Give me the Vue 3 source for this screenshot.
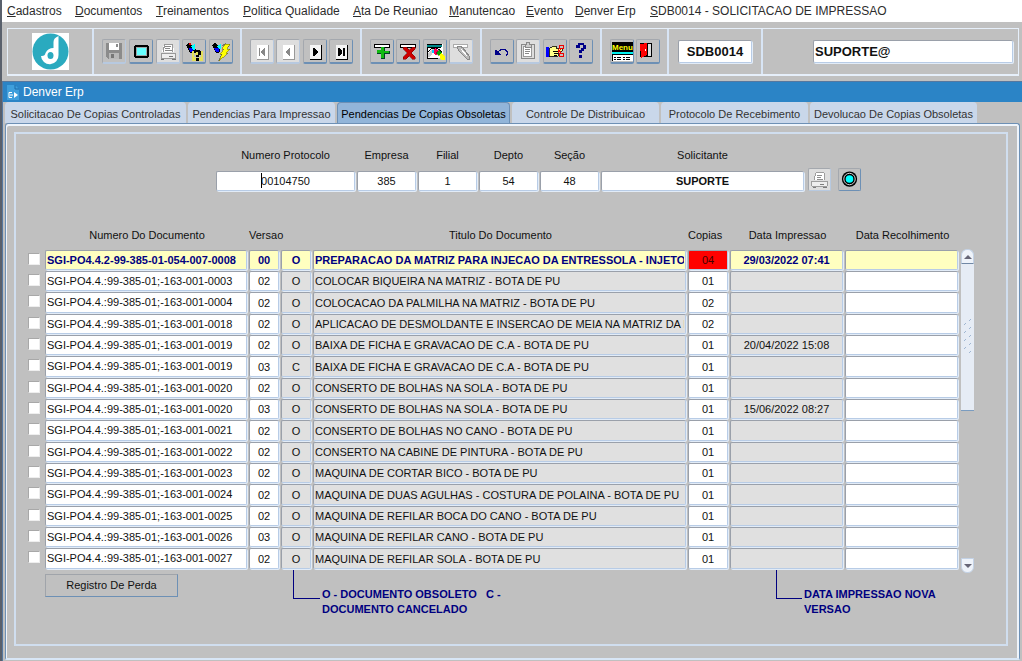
<script setup>
import { ref } from 'vue'

const menus = [
  'Cadastros', 'Documentos', 'Treinamentos', 'Politica Qualidade', 'Ata De Reuniao',
  'Manutencao', 'Evento', 'Denver Erp', 'SDB0014 - SOLICITACAO DE IMPRESSAO'
]

const tabs = [
  'Solicitacao De Copias Controladas', 'Pendencias Para Impressao', 'Pendencias De Copias Obsoletas',
  'Controle De Distribuicao', 'Protocolo De Recebimento', 'Devolucao De Copias Obsoletas'
]
const activeTab = ref(2)

const request = [
  { id: 'protocolo', label: 'Numero Protocolo', value: '00104750', cls: 'w-protocol' },
  { id: 'empresa', label: 'Empresa', value: '385', cls: 'w-short' },
  { id: 'filial', label: 'Filial', value: '1', cls: 'w-short' },
  { id: 'depto', label: 'Depto', value: '54', cls: 'w-short' },
  { id: 'secao', label: 'Seção', value: '48', cls: 'w-short' },
  { id: 'solicitante', label: 'Solicitante', value: 'SUPORTE', cls: 'w-name' }
]

const first = {
  number: 'SGI-PO4.4.2-99-385-01-054-007-0008', ver: '00', st: 'O',
  title: 'PREPARACAO DA MATRIZ PARA INJECAO DA ENTRESSOLA - INJETORA', copies: '04',
  printed: '29/03/2022 07:41'
}
const others = [
  ['0003', '02', 'O', 'COLOCAR BIQUEIRA NA MATRIZ - BOTA DE PU', '01', ''],
  ['0004', '02', 'O', 'COLOCACAO DA PALMILHA NA MATRIZ - BOTA DE PU', '02', ''],
  ['0018', '02', 'O', 'APLICACAO DE DESMOLDANTE E INSERCAO DE MEIA NA MATRIZ DA INJETORA', '02', ''],
  ['0019', '02', 'O', 'BAIXA DE FICHA E GRAVACAO DE C.A - BOTA DE PU', '01', '20/04/2022 15:08'],
  ['0019', '03', 'C', 'BAIXA DE FICHA E GRAVACAO DE C.A - BOTA DE PU', '01', ''],
  ['0020', '02', 'O', 'CONSERTO DE BOLHAS NA SOLA - BOTA DE PU', '01', ''],
  ['0020', '03', 'O', 'CONSERTO DE BOLHAS NA SOLA - BOTA DE PU', '01', '15/06/2022 08:27'],
  ['0021', '02', 'O', 'CONSERTO DE BOLHAS NO CANO - BOTA DE PU', '01', ''],
  ['0022', '02', 'O', 'CONSERTO NA CABINE DE PINTURA - BOTA DE PU', '01', ''],
  ['0023', '02', 'O', 'MAQUINA DE CORTAR BICO - BOTA DE PU', '01', ''],
  ['0024', '02', 'O', 'MAQUINA DE DUAS AGULHAS - COSTURA DE POLAINA - BOTA DE PU', '01', ''],
  ['0025', '02', 'O', 'MAQUINA DE REFILAR BOCA DO CANO - BOTA DE PU', '01', ''],
  ['0026', '03', 'O', 'MAQUINA DE REFILAR CANO - BOTA DE PU', '01', ''],
  ['0027', '02', 'O', 'MAQUINA DE REFILAR SOLA - BOTA DE PU', '01', '']
].map(([tail, ver, st, title, copies, printed]) => ({
  parts: ['SGI-PO4.4.:', '99-385-01', ';-163-001-' + tail], ver, st, title, copies, printed
}))
const rows = [first, ...others]
</script>

<template>
  <div class="app">
    <nav class="menu">
      <a v-for="m in menus" :key="m" href="#"><u>{{ m[0] }}</u>{{ m.slice(1) }}</a>
    </nav>

    <div class="toolbar">
      <div class="group g-logo">
        <svg width="37" height="37" viewBox="0 0 37 37">
          <rect width="37" height="37" fill="#fff" />
          <circle cx="18.5" cy="18.5" r="18" fill="#2aaabf" />
          <path d="M26.500 3V22A8.700 8.700 0 0 1 9 23Q13 23.500 13.500 20Q16 15 21.500 15V9Q21.500 5 26.500 3Z" fill="#fff" />
          <ellipse cx="18.500" cy="22.500" rx="3" ry="3.500" fill="#2aaabf" />
        </svg>
      </div>

      <div class="group g5">
        <button class="tool" aria-label="Salvar" disabled>
          <svg viewBox="1 1 22 22">
            <path d="M4 4H20V20H6L4 18Z" fill="#8b8b8b" />
            <path d="M7 4H17V11H7Z" fill="#fff" /><path d="M14 5H16V8H14Z" fill="#8b8b8b" />
            <path d="M7 14H17V20H7Z" fill="#b8b8b8" /><path d="M9 15H12V19H9Z" fill="#777" />
          </svg>
        </button>
        <button class="tool" aria-label="Tela">
          <svg viewBox="1 1 22 22">
            <path d="M6 6H19V7H20V18H19V19H6V18H5V7H6Z" fill="#000" />
            <path d="M7 8H18V17H7Z" fill="#a0a8a8" /><path d="M8 9H17V16H8Z" fill="#000" />
            <path d="M8 9H17V16H8Z" fill="#66ffff" />
          </svg>
        </button>
        <button class="tool off" aria-label="Imprimir" disabled>
          <svg viewBox="1 1 22 22">
            <path d="M8 5H17L18 13H6Z" fill="#fff" /><path d="M8 5H16V13M7 13V8H8V5" fill="none" stroke="#999" />
            <path d="M9 7.500H15M9 9.500H14M9 11.500H16" stroke="#888" />
            <path d="M5 14H19V19H5Z" fill="#eee" stroke="#999" /><path d="M13 17H17M5 20H8M16 20H20" stroke="#777" />
          </svg>
        </button>
        <button class="tool" aria-label="Entrar consulta">
          <svg viewBox="1 1 22 22">
            <path d="M4 6L7 4L14 10L11 14H8L6 10Z" fill="#000" /><path d="M7 9H11V13H8Z" fill="#00f" />
            <path d="M9 7L13 5V11H11Z" fill="#0ff" /><path d="M7 4H9V6H7Z" fill="#e00" />
            <path d="M10 12H12V22H10ZM19 12H21V22H19ZM13 13H16V16H13ZM17 18H19V22H17ZM12 18H14V22H12Z" fill="#e4e05a" />
            <path d="M12 14V12H13V11H18V12H19V16H17V18H14V16H16V13H14V14ZM14 19H17V22H14Z" fill="#000" />
          </svg>
        </button>
        <button class="tool" aria-label="Executar consulta">
          <svg viewBox="1 1 22 22">
            <path d="M3 6L6 4L12 9L10 14H7L5 10Z" fill="#000" /><path d="M5 9H10V13H7Z" fill="#00f" />
            <path d="M8 7L12 5V10H10Z" fill="#0ff" />
            <path d="M12 7L17 4L14 10H16L11 14H13L9 22L18 13H15L20 7Z" fill="#777" />
            <path d="M16 5H21L18 10H21L17 14H19L10 22L13 15H11L15 10H13Z" fill="#ff0" stroke="#665f00" stroke-width=".5" />
          </svg>
        </button>
      </div>

      <div class="group g4">
        <button class="tool off" aria-label="Primeiro" disabled>
          <svg viewBox="1 1 22 22"><path d="M7 6H18V20H7Z" fill="#fff" /><path d="M18.500 6V20.500H7" fill="none" stroke="#999" /><path d="M9 9H10V17H9ZM15 9V17H14L11 14V12L14 9Z" fill="#888" /></svg>
        </button>
        <button class="tool off" aria-label="Anterior" disabled>
          <svg viewBox="1 1 22 22"><path d="M7 6H18V20H7Z" fill="#fff" /><path d="M18.500 6V20.500H7" fill="none" stroke="#999" /><path d="M14 9V17H13L10 14V12L13 9Z" fill="#888" /></svg>
        </button>
        <button class="tool" aria-label="Proximo">
          <svg viewBox="1 1 22 22"><path d="M7 6H18V20H7Z" fill="#f4f4f4" /><path d="M18.500 6V20.500H7" fill="none" stroke="#000" /><path d="M10 9V17H11L15 14V12L11 9Z" fill="#000" /></svg>
        </button>
        <button class="tool" aria-label="Ultimo">
          <svg viewBox="1 1 22 22"><path d="M7 6H18V20H7Z" fill="#f4f4f4" /><path d="M18.500 6V20.500H7" fill="none" stroke="#000" /><path d="M9 9V17H10L13 14V12L10 9ZM14 9H16V17H14Z" fill="#000" /></svg>
        </button>
      </div>

      <div class="group g4">
        <button class="tool" aria-label="Inserir">
          <svg viewBox="1 1 22 22"><path d="M4 5H20V9H4Z" fill="#000" /><path d="M5 6H19V8H5Z" fill="#fff" /><path d="M12 8H15V12H20V15H15V20H11V15H7V12H12Z" fill="#042" /><path d="M11 8H14V12H19V14H14V19H11V14H7V11H11Z" fill="#1b1" /></svg>
        </button>
        <button class="tool" aria-label="Excluir">
          <svg viewBox="1 1 22 22"><path d="M4 5H20V9H4Z" fill="#000" /><path d="M5 6H19V8H5Z" fill="#fff" /><path d="M7 8H10L13 11L17 8H19V10L15 14L19 18V20H16L13 17L10 20H7V18L11 14L7 10Z" fill="#c00" stroke="#700" stroke-width=".5" /></svg>
        </button>
        <button class="tool" aria-label="Filtrar">
          <svg viewBox="1 1 22 22">
            <path d="M4 5H20V19H4Z" fill="#fff" /><path d="M4 6H19V8H4Z" fill="#088" /><path d="M4 5.500H19M4 8.500H18M4.500 9V19.500H15" fill="none" stroke="#000" />
            <path d="M5 14L9 10H12L7 18H5Z" fill="#ccc" /><path d="M5 13L9 9H14L19 13" fill="none" stroke="#000" />
            <path d="M10 11L13 9L16 13L13 16L10 14Z" fill="#f05" /><path d="M9 11H11V14H9Z" fill="#0cf" />
            <path d="M13 14L16 11L19 14L16 17Z" fill="#0a0" stroke="#030" stroke-width=".5" /><path d="M16 16L19 14L22 18V21H18Z" fill="#ff0" />
          </svg>
        </button>
        <button class="tool off" aria-label="Limpar" disabled>
          <svg viewBox="1 1 22 22"><path d="M4.500 5.500H18.500V8.500H4.500Z" fill="#fff" stroke="#aaa" /><path d="M8 8L11 7L14 9L20 17V20H18L10 12Z" fill="#bbb" stroke="#888" /><path d="M12 10L18 17" stroke="#fff" /></svg>
        </button>
      </div>

      <div class="group g4">
        <button class="tool" aria-label="Desfazer">
          <svg viewBox="1 1 22 22"><path d="M7 14L11 10.500H15L17.500 13V15L16 17" fill="none" stroke="#008" /><path d="M5 11V16H11V15L9 14L7 12V11Z" fill="#008" /></svg>
        </button>
        <button class="tool off" aria-label="Colar" disabled>
          <svg viewBox="1 1 22 22"><path d="M5 5H18V19H5Z" fill="#ddd" stroke="#888" /><path d="M7.500 7.500H15.500V17.500H7.500Z" fill="#fff" stroke="#999" /><path d="M9 5H10V3H13V5H15V8H9Z" fill="#ccc" stroke="#888" /><path d="M9 10.500H14M9 12.500H14M9 14.500H13" stroke="#888" /></svg>
        </button>
        <button class="tool" aria-label="Selecionar">
          <svg viewBox="1 1 22 22">
            <path d="M3 8H6V18H3Z" fill="#00f" /><path d="M6 10L10 7H13V9H19V12H15V17H11L6 18Z" fill="#ff8" stroke="#000" stroke-width=".8" />
            <path d="M10 12.500H15M11 14.500H15M11 16.500H14" stroke="#000" /><path d="M15 10L18 14M15 14L18 10" stroke="#e00" />
            <circle cx="18.500" cy="8" r="2" fill="none" stroke="#e00" /><circle cx="18.500" cy="16" r="2" fill="none" stroke="#e00" />
          </svg>
        </button>
        <button class="tool" aria-label="Ajuda">
          <svg viewBox="1 1 22 22"><path d="M7 9V6H9V4H15V6H17V10H15V12H13V14H10V11H12V9H14V6H11V9ZM10 16H13V19H10Z" fill="#008" /></svg>
        </button>
      </div>

      <div class="group g2">
        <button class="tool" aria-label="Menu">
          <svg viewBox="1 1 22 22">
            <path d="M2 3H23V13H2Z" fill="#000" /><text x="2" y="11" class="menu-word">Menu</text>
            <path d="M2 13H23V15H2Z" fill="#0ee" /><path d="M2 15H23V22H2Z" fill="#fff" /><path d="M2 15.500H23M2.500 15V22" stroke="#000" />
            <path d="M4 18H11M13 18H20M4 20.500H11M13 20.500H20" stroke="#000" stroke-dasharray="2 1 4 2" />
          </svg>
        </button>
        <button class="tool" aria-label="Sair">
          <svg viewBox="1 1 22 22"><path d="M4 4H16V18H4Z" fill="#000" /><path d="M12 5H15V17H12Z" fill="#ddd" /><path d="M4 5L11 4V16L5 19Z" fill="#f00" /><path d="M9 10H10V12H9Z" fill="#fff" /></svg>
        </button>
      </div>

      <div class="group g-code"><input class="field big center" aria-label="Programa" value="SDB0014" /></div>
      <div class="group g-user"><input class="field big" aria-label="Usuario" value="SUPORTE@" /></div>
    </div>

    <section class="window">
      <header class="titlebar">
        <svg width="13" height="15" viewBox="0 0 13 15">
          <path d="M0 0H8L12 4V15H0Z" fill="#3f9fdc" /><path d="M8 0V4H12" fill="none" stroke="#1e6aa8" />
          <path d="M5 7.500H2V12.500H5M3 10H6" fill="none" stroke="#fff" /><path d="M7 7L11 10L7 13Z" fill="#fff" />
        </svg>
        <span>Denver Erp</span>
      </header>

      <div class="tabs" role="tablist">
        <button v-for="(t, i) in tabs" :key="t" role="tab" class="tab" :class="{ active: i === activeTab }"
          :aria-selected="i === activeTab" @click="activeTab = i">{{ t }}</button>
      </div>

      <main class="page">
        <div class="frame">
          <form class="request" @submit.prevent>
            <div v-for="f in request" :key="f.id" class="req" :class="f.cls">
              <label :for="f.id">{{ f.label }}</label>
              <div class="req-box">
                <input :id="f.id" class="field center" :value="f.value" />
                <i v-if="f.id === 'protocolo'" class="caret"></i>
              </div>
            </div>
            <button type="button" class="tool small off print" aria-label="Imprimir solicitacao" disabled>
              <svg viewBox="1 1 22 22">
                <path d="M8 5H17L18 13H6Z" fill="#fff" /><path d="M8 5H17V13M7 13V8H8V5" fill="none" stroke="#999" />
                <path d="M9 7.500H15M9 9.500H14M9 11.500H16" stroke="#888" />
                <path d="M4 14H20V19H4Z" fill="#eee" stroke="#999" /><path d="M13 17H17M5 20H8M16 20H20" stroke="#777" />
              </svg>
            </button>
            <button type="button" class="tool small" aria-label="Confirmar">
              <svg class="smooth" viewBox="1 1 22 22"><circle cx="12" cy="11.500" r="8" fill="#000" /><circle cx="12" cy="11.500" r="6" fill="none" stroke="#ddd" stroke-width="1" /><circle cx="12" cy="11.500" r="4" fill="#0ff" /></svg>
            </button>
          </form>

          <div class="grid-area">
            <table class="docs">
              <colgroup>
                <col class="c-check" /><col class="c-num" /><col class="c-ver" /><col class="c-ver" />
                <col /><col class="c-cop" /><col class="c-date" /><col class="c-date" />
              </colgroup>
              <thead>
                <tr>
                  <th></th><th>Numero Do Documento</th><th>Versao</th><th></th><th>Titulo Do Documento</th>
                  <th class="left">Copias</th><th>Data Impressao</th><th>Data Recolhimento</th>
                </tr>
              </thead>
              <tbody>
                <tr v-for="(r, i) in rows" :key="i" :class="{ current: i === 0 }">
                  <td><input type="checkbox" class="check" :aria-label="'Selecionar linha ' + (i + 1)" /></td>
                  <td>
                    <input v-if="r.number" class="field" aria-label="Numero Do Documento" :value="r.number" />
                    <div v-else class="field number"><span v-for="p in r.parts" :key="p">{{ p }}</span></div>
                  </td>
                  <td><input class="field center" aria-label="Versao" :value="r.ver" /></td>
                  <td><input class="field center locked" aria-label="Situacao" :value="r.st" readonly /></td>
                  <td><input class="field locked" aria-label="Titulo Do Documento" :value="r.title" readonly /></td>
                  <td><input class="field center copies" aria-label="Copias" :value="r.copies" /></td>
                  <td><input class="field center locked" aria-label="Data Impressao" :value="r.printed" readonly /></td>
                  <td><input class="field" aria-label="Data Recolhimento" /></td>
                </tr>
              </tbody>
            </table>

            <div class="scroll">
              <button class="arrow up" aria-label="Rolar para cima"><svg width="8" height="4" viewBox="0 0 8 4"><path d="M0 4L4 0L8 4Z" fill="#667" /></svg></button>
              <div class="thumb">
                <svg width="9" height="36" viewBox="0 0 9 36">
                  <path d="M6 2L8 0M1 6L3 4M6 10L8 8M1 14L3 12M6 18L8 16M1 22L3 20M6 26L8 24M1 30L3 28M6 34L8 32" stroke="#9fb6d2" />
                </svg>
              </div>
              <button class="arrow down" aria-label="Rolar para baixo"><svg width="8" height="4" viewBox="0 0 8 4"><path d="M0 0H8L4 4Z" fill="#667" /></svg></button>
            </div>
          </div>

          <div class="foot">
            <button class="loss">Registro De Perda</button>
            <i class="elbow first"></i>
            <p>O - DOCUMENTO OBSOLETO &nbsp; C -<br />DOCUMENTO CANCELADO</p>
            <i class="elbow"></i>
            <p>DATA IMPRESSAO NOVA<br />VERSAO</p>
          </div>
        </div>
      </main>
    </section>
  </div>
</template>

<style>
html, body { background: #c0c0c0; }
</style>

<style scoped>
* { box-sizing: border-box; }
.app {
  min-height: 100vh;
  display: flex;
  flex-direction: column;
  border-left: 2px solid #59606c;
  background: #c0c0c0;
  color: #111;
  font: 11px/13px "Liberation Sans", Arial, sans-serif;
}
button, input { font: inherit; color: inherit; margin: 0; }

.menu {
  display: grid;
  grid-template-columns: 68px 81px 87px 110px 96px 77px 49px 75px 1fr;
  height: 22px;
  padding-left: 5px;
  background: #fff;
  font-size: 12px;
  line-height: 22px;
  white-space: nowrap;
}
.menu a { color: #2c2c2c; text-decoration: none; }

.toolbar {
  display: flex;
  height: 48px;
  margin: 6px 3px 5px 5px;
  border: 1px solid #e6effa;
  border-bottom-width: 2px;
}
.group {
  display: flex;
  align-items: center;
  justify-content: space-between;
  padding: 0 7px 0 8px;
  border-right: 2px solid #d8e5f5;
}
.g-logo { width: 86px; justify-content: center; padding: 0; }
.g5 { width: 148px; }
.g4 { width: 120px; }
.g2 { width: 67px; }
.g-code { width: 94px; padding: 0 9px; }
.g-user { flex: 1; padding: 0 5px 0 50px; border-right: 0; }

.tool {
  width: 24px;
  height: 25px;
  padding: 0;
  border: 1px solid #a4a8ae;
  border-right-color: #6d90b5;
  border-bottom: 2px solid #6d90b5;
  border-radius: 2px;
  background: #c0c0c0;
}
.tool:disabled { border-right-color: #b7c9e0; border-bottom-color: #b7c9e0; }
.tool.off { background: #dedede; }
.tool svg { display: block; width: 22px; height: 22px; shape-rendering: crispEdges; }
.tool svg.smooth { shape-rendering: auto; }
.tool.small { width: 23px; height: 23px; border-bottom-width: 1px; }
.tool.small svg { width: 21px; height: 21px; }
.menu-word { font: bold 8px "Liberation Sans", Arial, sans-serif; fill: #ff0; }

.field {
  display: block;
  width: 100%;
  height: 20px;
  padding: 0 1px;
  border: 1px solid #9aa0aa;
  border-right-color: #b8cce6;
  border-bottom-color: #b8cce6;
  border-radius: 2px;
  box-shadow: 1px 1px 0 #e2ecf8;
  background: #fff;
  outline: 0;
}
.center { text-align: center; }
.big { height: 23px; font-size: 13px; font-weight: bold; }
.locked { background: #e0e0e0; }
.number { display: flex; line-height: 18px; white-space: nowrap; }

.window {
  flex: 1;
  display: flex;
  flex-direction: column;
  border-left: 1px solid #56789f;
  border-top: 1px solid #56789f;
}
.titlebar {
  display: flex;
  align-items: center;
  gap: 3px;
  height: 20px;
  padding-left: 4px;
  background: #2b84c6;
  color: #fff;
  font-size: 12px;
}
.tabs {
  display: grid;
  grid-template-columns: 181px 147px 173px 147px 147px 167px;
  gap: 2px;
  height: 21px;
  padding-left: 2px;
}
.tab {
  padding: 3px 0 0;
  border: 0;
  border-radius: 4px 4px 0 0;
  background: #c9d7ea;
  color: #333;
  white-space: nowrap;
}
.tab.active {
  padding-top: 2px;
  border: 1px solid #6d90b5;
  border-bottom: 0;
  background: #92b5d9;
  color: #000;
}

.page {
  flex: 1;
  display: flex;
  margin: 0 2px 1px 2px;
  padding: 8px 11px 12px 8px;
  border: 1px solid #6d90b5;
  border-bottom: 2px solid #d8e6f6;
  border-radius: 3px 3px 0 0;
  box-shadow: inset 1px 2px 0 #eef4fb, inset -2px 0 0 #eef4fb;
}
.frame {
  flex: 1;
  min-width: 0;
  padding: 15px 32px 0 12px;
  border: 2px solid #d0deef;
}

.request {
  display: flex;
  align-items: flex-end;
  gap: 2px;
  padding: 0 113px 0 188px;
}
.req { display: flex; flex-direction: column; }
.req label { height: 22px; text-align: center; }
.req-box { position: relative; }
.w-protocol { width: 139px; }
.w-short { width: 59px; }
.w-name { flex: 1; font-weight: bold; }
.w-name label { font-weight: normal; }
.caret {
  position: absolute;
  left: 45px;
  top: 2px;
  width: 1px;
  height: 15px;
  background: #000;
}
.print { margin: 0 5px 0 2px; }

.grid-area { display: flex; gap: 1px; margin-top: 37px; }
.docs {
  flex: 1;
  width: 100%;
  min-width: 0;
  table-layout: fixed;
  border-collapse: collapse;
}
.c-check { width: 17px; }
.c-num { width: 204px; }
.c-ver { width: 32px; }
.c-cop { width: 42px; }
.c-date { width: 115px; }
.docs th { height: 22px; padding: 0 0 7px; font-weight: normal; white-space: nowrap; }
.docs th.left { text-align: left; }
.docs td { height: 21px; padding: 0 2px 0 0; vertical-align: top; }
.docs tbody tr:nth-child(3n) td { height: 22px; }
.docs tbody tr:nth-child(3n) .field { height: 21px; }
.current .field { background: #ffffc0; color: #000080; font-weight: bold; }
.current .field.copies { background: #f00; color: #400; font-weight: normal; }
.check {
  appearance: none;
  display: block;
  width: 12px;
  height: 12px;
  margin-top: 3px;
  border: 1px solid #a8a8a8;
  border-right-color: #eee;
  border-bottom-color: #eee;
  background: #fff;
}

.scroll { display: flex; flex-direction: column; width: 13px; margin: 21px 0 -3px; }
.arrow {
  display: flex;
  align-items: center;
  justify-content: center;
  width: 13px;
  height: 15px;
  padding: 0;
  border: 1px solid #c3d2e6;
  background: #eef3fa;
}
.up { border-radius: 6px 6px 0 0; border-bottom-color: #7188a5; }
.down { margin-top: auto; border-radius: 0 0 6px 6px; }
.thumb {
  display: flex;
  align-items: center;
  justify-content: center;
  height: 147px;
  border-bottom: 1px solid #7a9cc0;
  background: #e6ecf5;
}

.foot {
  display: grid;
  grid-template-columns: 133px 142px 1fr 26px 157px;
  padding: 0 15px 0 17px;
}
.loss {
  height: 23px;
  margin-top: 4px;
  padding: 0;
  border: 1px solid #a0a4aa;
  border-right-color: #6d90b5;
  border-bottom-color: #6d90b5;
  background: #c0c0c0;
}
.elbow { height: 29px; border-left: 1px solid #000080; border-bottom: 1px solid #000080; }
.elbow.first { margin-left: 115px; }
.foot p {
  margin: 17px 0 0;
  padding-left: 2px;
  color: #000080;
  font-weight: bold;
  line-height: 15px;
}
</style>
